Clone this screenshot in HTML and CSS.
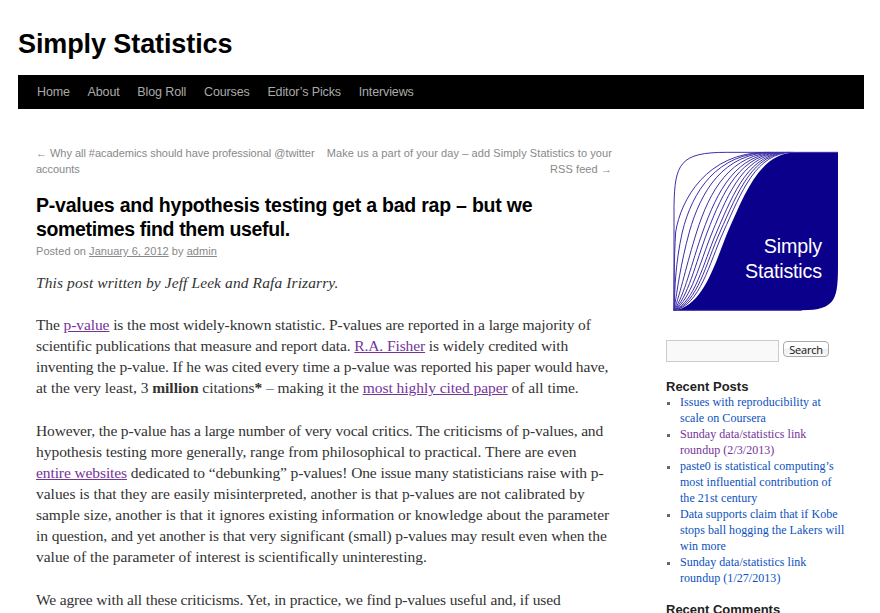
FILE: index.html
```html
<!DOCTYPE html>
<html lang="en">
<head>
<meta charset="utf-8">
<title>Simply Statistics</title>
<link rel="stylesheet" href="styles.css">
</head>
<body>
<header>
<h1 class="site-title">Simply Statistics</h1>
<nav class="menu"><a>Home</a><a>About</a><a>Blog Roll</a><a>Courses</a><a>Editor’s Picks</a><a>Interviews</a></nav>
</header>
<div class="main">
<main class="content">
<div class="post-nav"><div class="prev">← Why all #academics should have professional @twitter<br>accounts</div><div class="next">Make us a part of your day – add Simply Statistics to your<br>RSS feed →</div></div>
<h2 class="entry-title">P-values and hypothesis testing get a bad rap – but we<br><span class="tight">sometimes find them useful.</span></h2>
<div class="meta">Posted on <a>January 6, 2012</a> by <a>admin</a></div>
<div class="entry">
<p class="byline"><em>This post written by Jeff Leek and Rafa Irizarry.</em></p>
<p><span class="t2">The <a>p-value</a> is the most widely-known statistic. P-values are reported in a large majority of</span><br><span class="t2">scientific publications that measure and report data. <a>R.A. Fisher</a> is widely credited with</span><br><span class="t3">inventing the p-value. If he was cited every time a p-value was reported his paper would have,</span><br><span class="t1">at the very least, 3 <b>million</b> citations<b>*</b> – making it the <a>most highly cited paper</a> of all time.</span></p>
<p><span class="t4">However, the p-value has a large number of very vocal critics. The criticisms of p-values, and</span><br><span class="t1">hypothesis testing more generally, range from philosophical to practical. There are even</span><br><span class="t2"><a>entire websites</a> dedicated to “debunking” p-values! One issue many statisticians raise with p-</span><br><span class="t0">values is that they are easily misinterpreted, another is that p-values are not calibrated by</span><br><span class="t0">sample size, another is that it ignores existing information or knowledge about the parameter</span><br><span class="t2">in question, and yet another is that very significant (small) p-values may result even when the</span><br><span class="t0">value of the parameter of interest is scientifically uninteresting.</span></p>
<p><span class="t4">We agree with all these criticisms. Yet, in practice, we find p-values useful and, if used</span></p>
</div>
</main>
<aside class="side">
<svg class="logo" viewBox="0 0 570 540" width="190" height="180">
<path fill="#0b008b" d="M42 511C130 500 165 370 203 276C257 156 300 38 410 37H534V370C534 475 530 511 425 511Z"/>
<g fill="none" stroke="#3d2fa6" stroke-width="3">
<path d="M42 511V200C44 70 60 37 200 37H534M42 511H425"/>
<path d="M42 511C42 440 42 360 47 276C62 180 140 37 320 37"/>
<path d="M42 511C45 439 46 371 67 276C96 156 170 37 331 37"/>
<path d="M42 511C52 448 62 371 88 276C122 156 189 37 342 37"/>
<path d="M42 511C62 458 80 371 110 276C148 156 210 37 354 37"/>
<path d="M42 511C74 466 94 371 128 276C171 156 228 37 364 37"/>
<path d="M42 511C84 473 106 371 142 276C188 156 242 37 372 37"/>
<path d="M42 511C94 479 118 371 157 276C206 156 255 37 380 37"/>
<path d="M42 511C105 485 129 371 170 276C222 156 268 37 387 37"/>
<path d="M42 511C113 490 137 371 180 276C234 156 278 37 392 37"/>
<path d="M42 511C121 495 147 371 190 276C244 156 288 37 398 37"/>
</g>
<g fill="#fff" font-family="Liberation Sans" font-size="59" text-anchor="end">
<text x="486" y="338" textLength="175">Simply</text>
<text x="486" y="415" textLength="231">Statistics</text>
</g>
</svg>
<form class="search"><input type="text" aria-label="Search"><button type="button">Search</button></form>
<h3>Recent Posts</h3>
<ul>
<li>Issues with reproducibility at<br>scale on Coursera</li>
<li class="visited">Sunday data/statistics link<br>roundup (2/3/2013)</li>
<li>paste0 is statistical computing’s<br>most influential contribution of<br>the 21st century</li>
<li>Data supports claim that if Kobe<br>stops ball hogging the Lakers will<br>win more</li>
<li>Sunday data/statistics link<br>roundup (1/27/2013)</li>
</ul>
<h3>Recent Comments</h3>
</aside>
</div>
</body>
</html>
```
FILE: styles.css
```css
body{margin:0;height:613px;overflow:hidden;background:#fff;font-family:"Liberation Sans",Arial,sans-serif;color:#333;white-space:nowrap}
header{padding:26px 16px 0 18px}
.site-title{margin:0;height:49px;font-size:27px;line-height:36px;color:#000;letter-spacing:-.1px}
.menu{display:flex;gap:17.7px;height:34px;background:#000;padding-left:19px;font-size:12.5px;line-height:34px;letter-spacing:-.12px;color:#aaa}
.main{display:flex;gap:54px;padding-left:36px}
.content{width:576px;padding-top:36px}
.post-nav{display:flex;justify-content:space-between;font-size:11px;line-height:16px;color:#888}
.prev{letter-spacing:-.03px}
.next{text-align:right;letter-spacing:.08px}
.entry-title{margin:16px 0 0;font-size:19.5px;line-height:24px;letter-spacing:-.22px;color:#000}
.tight{letter-spacing:-.35px}
.meta{padding-top:1px;font-size:11px;line-height:18px;letter-spacing:.05px;color:#888}
.meta a,.entry a{text-decoration:underline}
.entry{margin-top:12px;font:15.5px/21px "Liberation Serif",serif}
.entry p{margin:0 0 22px}
.entry .byline{margin-bottom:21px;letter-spacing:.1px}
.entry a{color:#743399}
.t0{letter-spacing:-.02px}
.t1{letter-spacing:-.04px}
.t2{letter-spacing:-.1px}
.t3{letter-spacing:-.13px}
.t4{letter-spacing:-.145px}
.side{width:190px}
.logo{display:block;margin:31px 0 0 -6px}
.search{display:flex;align-items:flex-start;gap:4px;margin:20px 0 17px}
.search input{box-sizing:border-box;width:113px;height:22px;border:1px solid #ccc;background:#f9f9f9}
.search button{box-sizing:border-box;width:46px;height:16px;margin-top:1px;padding:0;border:1px solid #aaa;border-radius:4px;background:linear-gradient(#fff 45%,#eee 50%,#fafafa);font:11px/13px "Open Sans",sans-serif;letter-spacing:-.2px;color:#111}
.side h3{margin:0;font-size:13px;line-height:15px;color:#222}
.side ul{margin:0 0 16px;padding-left:14px;list-style:square;font:12px/16px "Liberation Serif",serif;letter-spacing:.04px;color:#0b51bd}
li::marker{color:#666;font-size:11px}
.side .visited{color:#743399}
```
